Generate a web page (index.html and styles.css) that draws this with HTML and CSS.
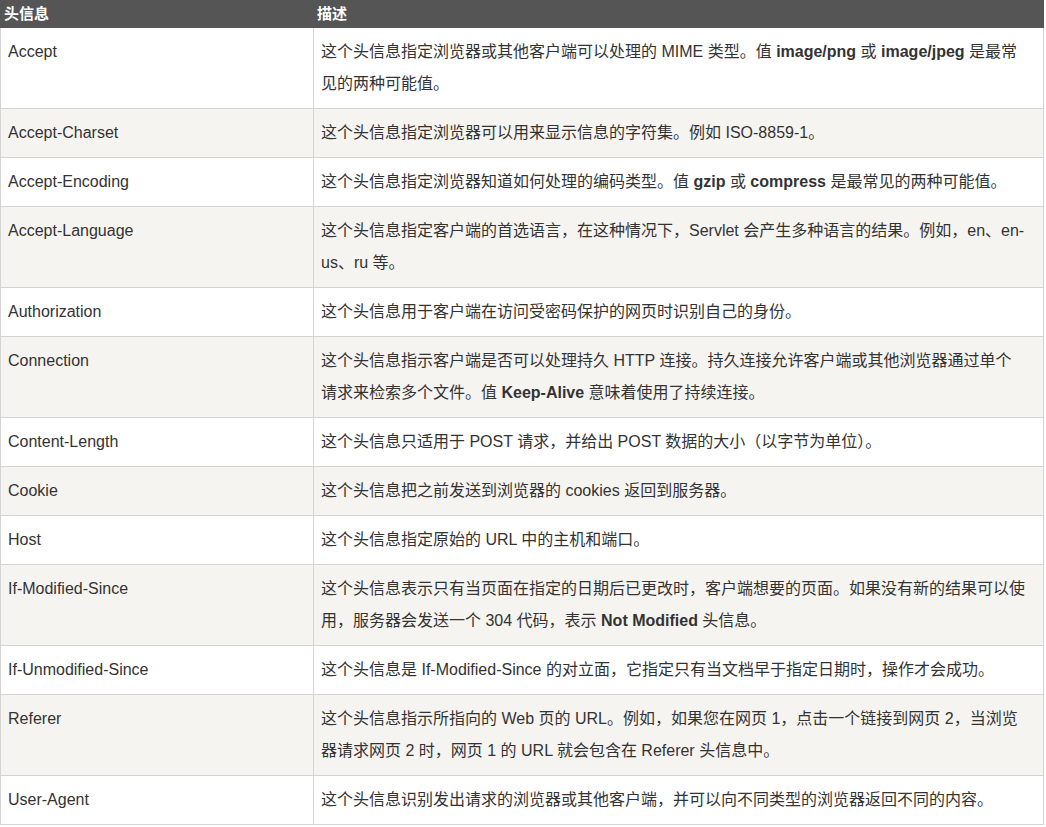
FILE: index.html
```html
<!DOCTYPE html>
<html lang="zh-CN">
<head>
<meta charset="utf-8">
<title>HTTP 头信息</title>
<link rel="stylesheet" href="styles.css">
</head>
<body>
<table class="reference">
  <colgroup>
    <col class="col-name">
    <col class="col-desc">
  </colgroup>
  <thead>
    <tr><th>头信息</th><th>描述</th></tr>
  </thead>
  <tbody>
    <tr><td>Accept</td><td>这个头信息指定浏览器或其他客户端可以处理的 MIME 类型。值 <b>image/png</b> 或 <b>image/jpeg</b> 是最常<br>见的两种可能值。</td></tr>
    <tr><td>Accept-Charset</td><td>这个头信息指定浏览器可以用来显示信息的字符集。例如 ISO-8859-1。</td></tr>
    <tr><td>Accept-Encoding</td><td>这个头信息指定浏览器知道如何处理的编码类型。值 <b>gzip</b> 或 <b>compress</b> 是最常见的两种可能值。</td></tr>
    <tr><td>Accept-Language</td><td>这个头信息指定客户端的首选语言，在这种情况下，Servlet 会产生多种语言的结果。例如，en、en-<br>us、ru 等。</td></tr>
    <tr><td>Authorization</td><td>这个头信息用于客户端在访问受密码保护的网页时识别自己的身份。</td></tr>
    <tr><td>Connection</td><td>这个头信息指示客户端是否可以处理持久 HTTP 连接。持久连接允许客户端或其他浏览器通过单个<br>请求来检索多个文件。值 <b>Keep-Alive</b> 意味着使用了持续连接。</td></tr>
    <tr><td>Content-Length</td><td>这个头信息只适用于 POST 请求，并给出 POST 数据的大小（以字节为单位）。</td></tr>
    <tr><td>Cookie</td><td>这个头信息把之前发送到浏览器的 cookies 返回到服务器。</td></tr>
    <tr><td>Host</td><td>这个头信息指定原始的 URL 中的主机和端口。</td></tr>
    <tr><td>If-Modified-Since</td><td>这个头信息表示只有当页面在指定的日期后已更改时，客户端想要的页面。如果没有新的结果可以使<br>用，服务器会发送一个 304 代码，表示 <b>Not Modified</b> 头信息。</td></tr>
    <tr><td>If-Unmodified-Since</td><td>这个头信息是 If-Modified-Since 的对立面，它指定只有当文档早于指定日期时，操作才会成功。</td></tr>
    <tr><td>Referer</td><td>这个头信息指示所指向的 Web 页的 URL。例如，如果您在网页 1，点击一个链接到网页 2，当浏览<br>器请求网页 2 时，网页 1 的 URL 就会包含在 Referer 头信息中。</td></tr>
    <tr><td>User-Agent</td><td>这个头信息识别发出请求的浏览器或其他客户端，并可以向不同类型的浏览器返回不同的内容。</td></tr>
  </tbody>
</table>
</body>
</html>
```

FILE: styles.css
```css
html, body {
  margin: 0;
  padding: 0;
  background: #fff;
}

body {
  font-family: "Liberation Sans", Arial, "Noto Sans CJK SC", sans-serif;
  font-size: 16px;
  color: #333;
}

.reference {
  width: 1044px;
  border-collapse: collapse;
  table-layout: fixed;
}

.col-name {
  width: 313px;
}

.reference th {
  background: #555;
  color: #fff;
  border: 1px solid #555;
  font-weight: bold;
  text-align: left;
  vertical-align: top;
  padding: 2px 3px 2px 3px;
  line-height: 22px;
  font-size: 15px;
}

.reference td {
  border: 1px solid #d4d4d4;
  padding: 8px 6px 8px 7px;
  line-height: 32px;
  vertical-align: top;
}

.reference tbody tr:nth-child(even) {
  background: #f6f4f0;
}

.reference b {
  font-weight: bold;
}
```
